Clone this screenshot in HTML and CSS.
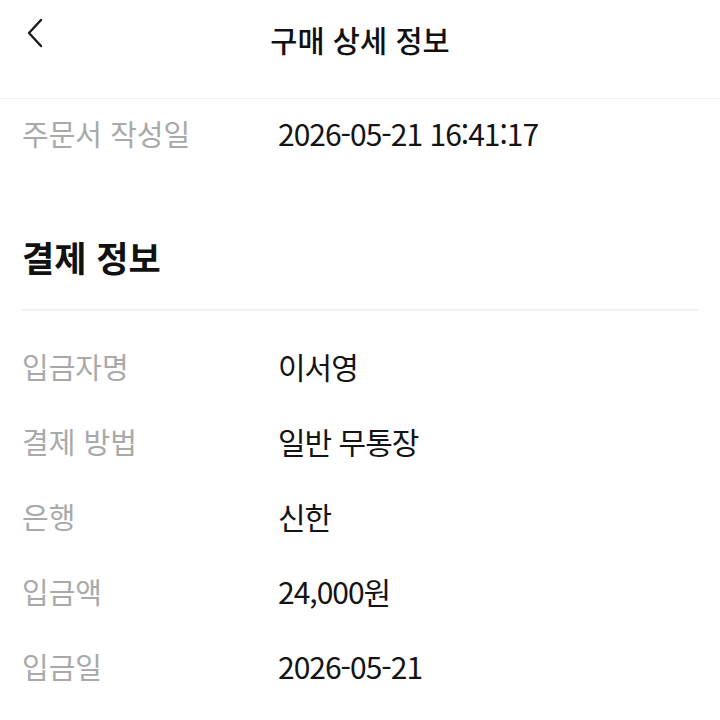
FILE: index.html
```html
<!DOCTYPE html>
<html lang="ko">
<head>
<meta charset="utf-8">
<title>구매 상세 정보</title>
<link rel="stylesheet" href="styles.css">
</head>
<body>
<header class="topbar">
  <button class="back" aria-label="뒤로">
    <svg width="18" height="30" viewBox="0 0 18 30"><path d="M15 2 L3 15 L15 28" fill="none" stroke="#1a1a1a" stroke-width="2.4" stroke-linecap="round" stroke-linejoin="round"/></svg>
  </button>
  <h1 class="title">구매 상세 정보</h1>
  <span class="spacer"></span>
</header>
<main>
  <div class="row first"><span class="label">주문서 작성일</span><span class="value">2026-05-21 16:41:17</span></div>
  <h2 class="section-title">결제 정보</h2>
  <div class="divider"></div>
  <div class="list">
    <div class="row"><span class="label">입금자명</span><span class="value">이서영</span></div>
    <div class="row"><span class="label">결제 방법</span><span class="value">일반 무통장</span></div>
    <div class="row"><span class="label">은행</span><span class="value">신한</span></div>
    <div class="row"><span class="label">입금액</span><span class="value">24,000원</span></div>
    <div class="row"><span class="label">입금일</span><span class="value">2026-05-21</span></div>
  </div>
</main>
</body>
</html>
```
FILE: styles.css
```css
html, body {
  margin: 0;
  padding: 0;
  background: #ffffff;
}
body {
  font-family: "Noto Sans CJK KR", "Noto Sans", sans-serif;
  color: #111111;
}
.topbar {
  display: grid;
  grid-template-columns: 1fr auto 1fr;
  align-items: start;
  height: 98px;
  border-bottom: 1px solid #f3f3f3;
  box-sizing: content-box;
}
.back {
  justify-self: start;
  margin: 18px 0 0 26px;
  padding: 0;
  border: 0;
  background: none;
  width: 18px;
  height: 30px;
  display: block;
}
.back svg { display: block; }
.title {
  margin: 0;
  font-size: 29.5px;
  font-weight: 500;
  line-height: 40px;
  padding-top: 19px;
  color: #111;
}
.row {
  display: flex;
  align-items: center;
  height: 75px;
  padding-left: 22px;
  font-size: 29px;
  line-height: 40px;
}
.row.first {
  height: 68px;
}
.label {
  width: 256px;
  flex: none;
  color: #a9a9a9;
}
.value {
  color: #141414;
  font-size: 30px;
  letter-spacing: -1px;
}
.section-title {
  margin: 66px 0 0 22px;
  font-size: 35px;
  font-weight: 700;
  line-height: 48px;
  color: #111;
}
.divider {
  height: 2px;
  background: #f1f1f1;
  margin: 28px 22px 0 22px;
}
.list {
  padding-top: 17px;
}
```
